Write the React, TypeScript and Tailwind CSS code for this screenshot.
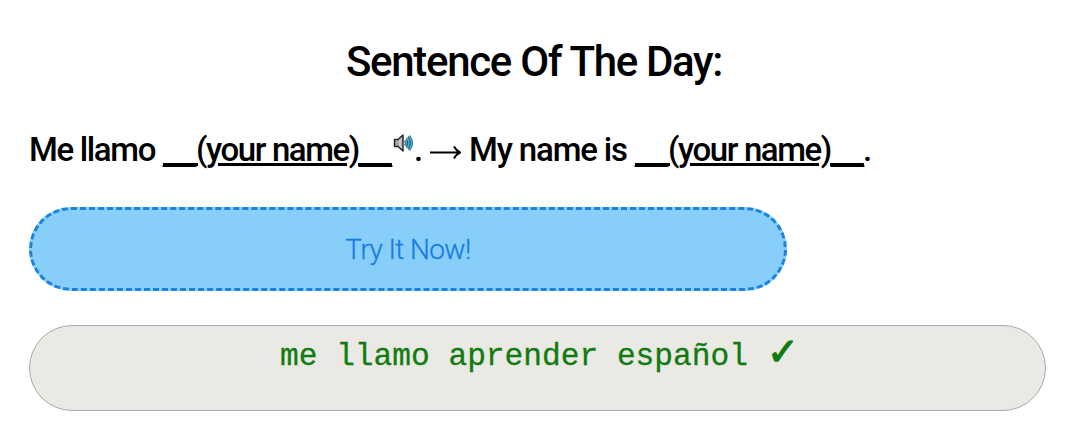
function Underscores() {
  return (
    <span className="w-[33px] font-['Liberation_Sans',sans-serif] text-[29.600px] font-normal underline decoration-[2px] underline-offset-[2px] [text-decoration-skip-ink:none]">
      __
    </span>
  );
}

function Blank() {
  return (
    <span className="flex items-baseline">
      <Underscores />
      <span className="w-[163px] tracking-[-1.4px] underline decoration-[3px] underline-offset-[2px]">(your name)</span>
      <Underscores />
    </span>
  );
}

function Speaker() {
  return (
    <svg width="22" height="18" viewBox="0 0 22 18" className="-mt-[14px] shrink-0 self-center">
      <path d="M2.500 5.500H6L11 1v16L6 12.500H2.500z" fill="#aaa7a7" stroke="#242424" strokeWidth="1.4" strokeLinejoin="round" />
      <path d="M7 6l2.500-2.500v11L7 12z" fill="#cbc8c9" />
      <path d="M13 6.500q2.500 2.500 0 5M15 4q4 5 0 10M17 2q5.500 7 0 14" fill="none" stroke="#174d61" strokeWidth="2.6" />
      <path d="M13 6.500q2.500 2.500 0 5M15 4q4 5 0 10M17 2q5.500 7 0 14" fill="none" stroke="#45b5d6" strokeWidth="1.5" />
    </svg>
  );
}

export default function App() {
  return (
    <main className="h-[434px] w-[1077px] overflow-hidden bg-white pl-[29px] pt-[36px] font-['Roboto',sans-serif] text-black">
      <h1 className="ml-[317px] h-[52px] w-[400px] whitespace-nowrap text-[42px] font-medium leading-[52px] tracking-[-1.320px]">
        Sentence Of The Day:
      </h1>
      <p className="mt-[39px] flex h-[46px] items-baseline whitespace-nowrap text-[33px] font-medium leading-[46px]">
        <span className="w-[134px] tracking-[-1.350px]">Me llamo</span>
        <Blank />
        <Speaker />
        <span className="w-[16px]">.</span>
        <svg width="31" height="46" viewBox="0 0 31 46" className="mr-[8px] shrink-0 self-center" fill="none" stroke="black" strokeWidth="2">
          <path d="M0 25.500H30M24 19.500q2.500 4.500 6 6q-3.500 1.500-6 6" />
        </svg>
        <span className="w-[166px] tracking-[-1.150px]">My name is</span>
        <Blank />
        <span className="-ml-px">.</span>
      </p>
      <button className="mt-[34px] block h-[84px] w-[758px] rounded-[42px] border-[3px] border-dashed border-[#1c82e0] bg-[#87cefa] pt-[2px] text-[28px] font-light leading-[76px] tracking-[-0.600px] text-[#167de4] [-webkit-text-stroke:0.3px_#167de4]">
        Try It Now!
      </button>
      <div className="mt-[34px] flex h-[86px] w-[1017px] items-baseline rounded-[43px] border border-[#a9a9a9] bg-[#eae9e3] pl-[250px] font-['Liberation_Mono',monospace] text-[31.200px] leading-[55px] text-[#107b10] [-webkit-text-stroke:0.3px_#107b10]">
        <span className="w-[487px] whitespace-pre">me llamo aprender español</span>
        <span className="font-['DejaVu_Sans',sans-serif] text-[38px] font-bold leading-[52px] [-webkit-text-stroke:1.2px_#107b10]">✓</span>
      </div>
    </main>
  );
}
